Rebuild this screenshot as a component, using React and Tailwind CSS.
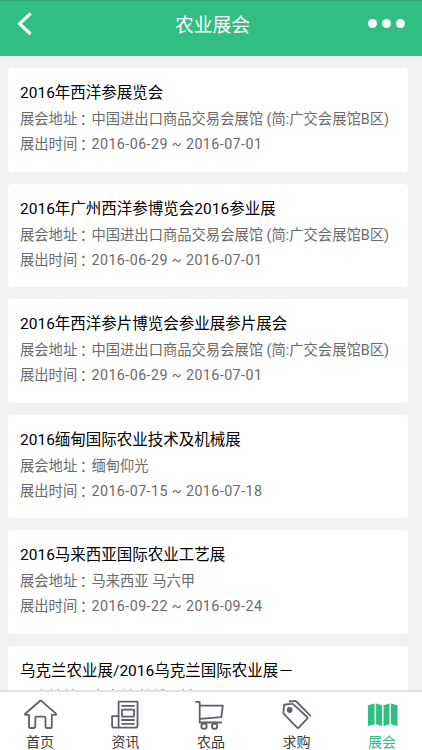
const fairs = [
  {
    title: '2016年西洋参展览会',
    address: '中国进出口商品交易会展馆 (简:广交会展馆B区)',
    start: '2016-06-29',
    end: '2016-07-01',
  },
  {
    title: '2016年广州西洋参博览会2016参业展',
    address: '中国进出口商品交易会展馆 (简:广交会展馆B区)',
    start: '2016-06-29',
    end: '2016-07-01',
  },
  {
    title: '2016年西洋参片博览会参业展参片展会',
    address: '中国进出口商品交易会展馆 (简:广交会展馆B区)',
    start: '2016-06-29',
    end: '2016-07-01',
  },
  {
    title: '2016缅甸国际农业技术及机械展',
    address: '缅甸仰光',
    start: '2016-07-15',
    end: '2016-07-18',
  },
  {
    title: '2016马来西亚国际农业工艺展',
    address: '马来西亚 马六甲',
    start: '2016-09-22',
    end: '2016-09-24',
  },
  {
    title: '乌克兰农业展/2016乌克兰国际农业展－',
    address: '乌克兰 基辅展馆',
    start: '2016-10-12',
    end: '2016-10-14',
  },
]

function Icon({ children }) {
  return (
    <svg
      className="h-[34px] w-9"
      viewBox="0 0 36 34"
      fill="none"
      stroke="currentColor"
      strokeWidth="1.8"
      strokeLinecap="round"
      strokeLinejoin="round"
    >
      {children}
    </svg>
  )
}

function HomeIcon() {
  return (
    <Icon>
      <path d="M18.2 2.7 3.2 15.7c-.5.5-.3 1.2.5 1.2H7v11.8c0 .9.4 1.3 1.3 1.3h3.8c.8 0 1.2-.4 1.2-1.2v-8.7c0-1 .5-1.5 1.5-1.5h7.2c1 0 1.5.5 1.5 1.5v8.7c0 .8.4 1.2 1.2 1.2h3.8c.9 0 1.3-.4 1.3-1.3V16.9h3.6c.8 0 1-.7.5-1.2L19.4 2.8a.9.9 0 0 0-1.2-.1Z" />
    </Icon>
  )
}

function NewsIcon() {
  return (
    <Icon>
      <path d="M10.6 29.2V3.6h18.9v23.6c0 1.6-.8 2.5-2.3 2.5H6.2c-1.4 0-2.1-.7-2.1-2V18.2h6.5" />
      <path d="M14 7.9h12M14 22h12M14 25.8h12M14 11.6h12v7H14Z" />
    </Icon>
  )
}

function CartIcon() {
  return (
    <Icon>
      <path d="M2.9 3.8h3.8v20.7h21.6" />
      <path d="M6.8 7.6h23l-1.5 11.6-21.3 1.6" />
      <circle cx="11" cy="28.2" r="2.7" />
      <circle cx="21.6" cy="28.2" r="2.7" />
    </Icon>
  )
}

function TagIcon() {
  return (
    <Icon>
      <path d="M5 7.7c.1-.7.5-1.1 1.2-1.2l6.7-.6c.6-.1 1.1.1 1.5.5L28.2 19c.5.5.5 1.1 0 1.6l-8.5 9c-.5.5-1.1.5-1.6 0L4.8 15.9c-.3-.3-.5-.8-.4-1.3Z" />
      <path d="m10.5 3.5 5.4-.5c.6-.1 1 .1 1.4.5l14 14.1" />
      <circle cx="10.6" cy="12" r="2" fill="currentColor" />
    </Icon>
  )
}

function FairIcon() {
  return (
    <Icon>
      <g fill="currentColor" stroke="none">
        <path d="M3.9 7.2 10.6 5.4v20.9l-6.7 1.8Z" />
        <path d="m12.1 5.4 6 1.8v20.9l-6-1.8Z" />
        <path d="m19.5 7.2 6-1.8v20.9l-6 1.8Z" />
        <path d="m26.9 5.4 6.6 1.8v20.9l-6.6-1.8Z" />
      </g>
    </Icon>
  )
}

const tabs = [
  { label: '首页', icon: HomeIcon },
  { label: '资讯', icon: NewsIcon },
  { label: '农品', icon: CartIcon },
  { label: '求购', icon: TagIcon },
  { label: '展会', icon: FairIcon, active: true },
]

function Row({ label, children }) {
  return (
    <p className="h-[25px] text-[14.3px] leading-[25px] whitespace-nowrap text-[#6b6b6b]">
      {label}
      <span className="relative top-px right-px font-['Noto_Sans_CJK_TC',sans-serif]">：</span>
      {children}
    </p>
  )
}

function FairCard({ fair }) {
  return (
    <li className="h-[103.5px] shrink-0 rounded bg-white px-3 pt-[13px]">
      <h2 className="h-6 text-[15.5px] leading-[25px] whitespace-nowrap text-black">{fair.title}</h2>
      <Row label="展会地址">{fair.address}</Row>
      <Row label="展出时间">
        <span className="tracking-[0.42px]">
          {fair.start} ~ {fair.end}
        </span>
      </Row>
    </li>
  )
}

export default function App() {
  return (
    <div className="flex h-[750px] w-[422px] flex-col overflow-hidden bg-[#f2f2f2] font-['Roboto','Noto_Sans_CJK_SC',sans-serif]">
      <header className="flex h-14 shrink-0 items-start justify-between border-t border-[#2da773] bg-[#31be82] text-white">
        <button type="button" aria-label="返回" className="mt-[11px] ml-4 w-16">
          <svg className="h-6 w-5" viewBox="0 0 20 24" fill="none" stroke="currentColor" strokeWidth="3.2">
            <path d="m14.6 1.5-11 10.2 11 10.5" />
          </svg>
        </button>
        <h1 className="h-12 pl-[3px] text-[18.8px] leading-[50px]">农业展会</h1>
        <button type="button" aria-label="更多" className="mt-[18px] mr-[17px] flex w-[63px] justify-end gap-[5px]">
          <span className="size-[9px] rounded-full bg-white" />
          <span className="size-[9px] rounded-full bg-white" />
          <span className="size-[9px] rounded-full bg-white" />
        </button>
      </header>

      <main className="min-h-0 flex-1 overflow-hidden px-2 pt-3">
        <ul className="flex flex-col gap-3 pr-1.5">
          {fairs.map((fair) => (
            <FairCard key={fair.title} fair={fair} />
          ))}
        </ul>
      </main>

      <nav className="flex h-[60px] shrink-0 justify-between border-t-2 border-[#e2e2e2] bg-white px-[22px]">
        {tabs.map(({ label, icon: TabIcon, active }) => (
          <a
            key={label}
            className={`flex w-9 flex-col items-center pt-1.5 ${active ? 'text-[#31be82]' : 'text-[#5c616b]'}`}
          >
            <TabIcon />
            <span className={`mt-0.5 text-[14px] leading-4 whitespace-nowrap ${active ? '' : 'text-[#3c3c3c]'}`}>
              {label}
            </span>
          </a>
        ))}
      </nav>
    </div>
  )
}
